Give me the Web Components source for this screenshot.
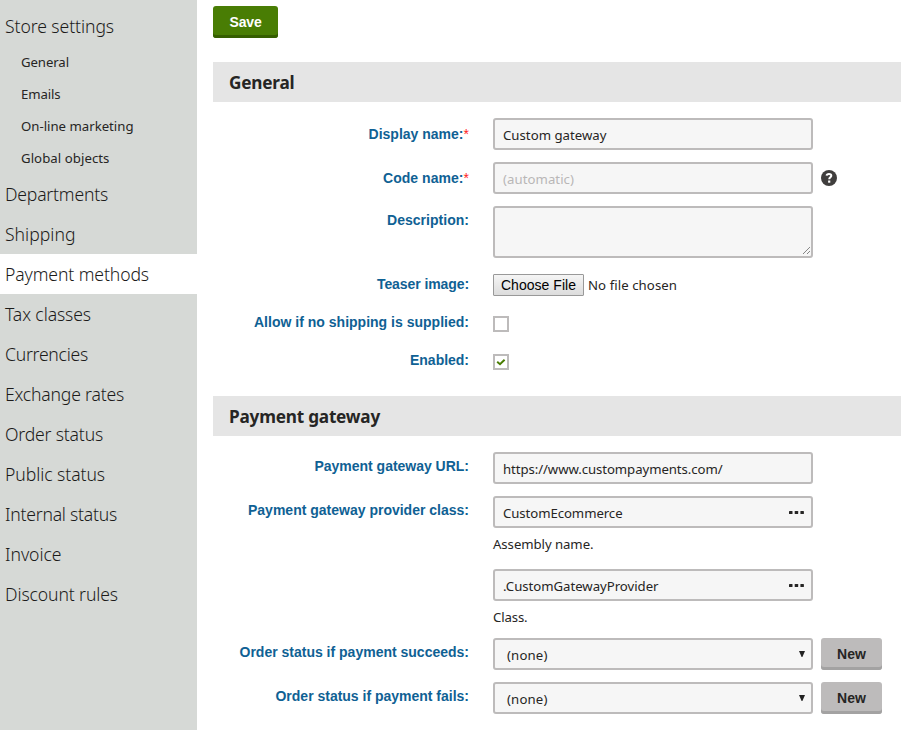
<!DOCTYPE html>
<html lang="en">
<head>
<meta charset="utf-8">
<title>Payment methods</title>
<style>
html, body { margin: 0; height: 100%; }
body { background: #fff; color: #262524; overflow: hidden; font: 14px/20px "Noto Sans", "Open Sans", sans-serif; }
</style>
</head>
<body>
<store-app></store-app>
<script>
const define = (name, html, setup) => {
  const template = document.createElement('template');
  template.innerHTML = html;
  customElements.define(name, class extends HTMLElement {
    constructor() {
      super();
      this.attachShadow({ mode: 'open' }).append(template.content.cloneNode(true));
    }
    connectedCallback() { if (setup) setup(this, this.shadowRoot); }
  });
};

// Text run whose letter-spacing is adjusted to reach the advance width given in "w".
define('fit-text', `<style>
:host { display: inline-block; white-space: nowrap; }
</style><slot></slot>`, el => {
  const w = parseFloat(el.getAttribute('w'));
  const count = el.textContent.length;
  if (w && count) el.style.letterSpacing = ((w - el.getBoundingClientRect().width) / count).toFixed(3) + 'px';
});

define('nav-item', `<style>
:host { display: flex; align-items: center; box-sizing: border-box; height: 40px; padding: 1px 0 0 5px; font-size: 17.6px; font-weight: 300; line-height: 39px; color: #1c1b1a; }
:host([sub]) { height: 32px; padding: 0 0 0 21px; font-size: 13.2px; font-weight: 400; line-height: 32px; color: #262524; }
:host([active]) { background: #fff; }
</style><slot></slot>`);

define('side-nav', `<style>
:host { display: block; box-sizing: border-box; width: 197px; height: 100%; padding-top: 6px; background: #d6d9d6; }
</style><slot></slot>`);

define('form-section', `<style>
:host { display: block; }
h2 { margin: 0; height: 40px; box-sizing: border-box; padding: 1px 0 0 16px; background: #e5e5e5; font-size: 17.2px; line-height: 40px; font-weight: 700; }
.rows { display: flex; flex-direction: column; gap: 12px; padding-top: 16px; }
</style><h2><slot name="title"></slot></h2><div class="rows"><slot></slot></div>`);

define('form-row', `<style>
:host { display: grid; grid-template-columns: 256px 1fr; column-gap: 24px; align-items: start; }
.label { padding-top: var(--lt, 4px); text-align: right; line-height: 20px; color: #0f6194; font: bold 14px/20px "Liberation Sans", Arial, sans-serif; }
.field { display: flex; align-items: center; gap: 8px; }
</style><div class="label"><slot name="label"></slot></div><div class="field"><slot></slot></div>`);

define('req-mark', `<style>:host { color: #f22; font-weight: 400; }</style>*`);

define('text-field', `<style>
:host { display: flex; align-items: center; box-sizing: border-box; width: 320px; height: 32px; border: 2px solid #bdbbbb; border-radius: 3px; background: #f6f6f6; padding: 2px 8px 0; font-size: 13.2px; line-height: 20px; }
:host([hint]) { color: #b9b7b7; }
:host([area]) { position: relative; height: 52px; }
svg { display: none; margin-left: auto; }
:host([area]) .grip { display: block; position: absolute; right: 0; bottom: 1px; }
:host([more]) .dots { display: block; margin-right: -1px; margin-top: -2px; }
:host([select]) { padding-left: 12px; }
:host([select]) .tri { display: block; margin-right: -2px; margin-top: -2px; }
</style><slot></slot>
<svg class="grip" width="9" height="9" viewBox="0 0 9 9" stroke="#555" stroke-width="1" stroke-dasharray="1 .4"><path d="M1 8L8 1M5 8L8 5"/></svg>
<svg class="dots" width="15" height="3" viewBox="0 0 15 3" fill="#262524"><rect width="3.5" height="3" rx=".6"/><rect x="5.7" width="3.5" height="3" rx=".6"/><rect x="11.4" width="3.5" height="3" rx=".6"/></svg>
<svg class="tri" width="6" height="6" viewBox="0 0 6 6" fill="#222"><path d="M0 0H6L3.4 6H2.6Z"/></svg>`);

define('push-button', `<style>
:host { display: flex; justify-content: center; box-sizing: border-box; width: 61px; height: 32px; border-radius: 3px; background: #bdbbbb; box-shadow: inset 0 -3px #a3a2a2; color: #262524; font: bold 14px/32px "Liberation Sans", Arial, sans-serif; }
:host([primary]) { width: 65px; background: #497d04; box-shadow: inset 0 -3px #355e00; color: #fff; }
</style><slot></slot>`);

define('file-button', `<style>
:host { display: flex; justify-content: center; box-sizing: border-box; width: 91px; height: 22px; margin-right: -4px; border: 1px solid #999; border-radius: 1px; background: linear-gradient(#f5f5f5, #dcdcdc); color: #000; font: 14px/20px "Liberation Sans", Arial, sans-serif; }
</style><slot></slot>`);

define('check-box', `<style>
:host { display: grid; place-items: center; box-sizing: border-box; width: 16px; height: 16px; border: 2px solid #bdbbbb; background: #fff; }
svg { display: none; }
:host([checked]) svg { display: block; }
</style><svg width="10" height="8" viewBox="0 0 10 8" fill="none" stroke="#497d04" stroke-width="2"><path d="M1.2 3.8L4 6.2L8.6 1.8"/></svg>`);

define('help-icon', `<style>:host { display: block; height: 16px; }</style>
<svg width="16" height="16" viewBox="0 0 16 16"><circle cx="8" cy="8" r="8" fill="#403e3d"/><path d="M5.6 5.6C5.7 4.4 6.6 3.9 8 3.9C9.4 3.9 10.3 4.6 10.3 5.7C10.3 7.2 8.2 7.3 8.2 9.2" fill="none" stroke="#fff" stroke-width="2"/><rect x="7.1" y="10.5" width="2.2" height="2.2" fill="#fff"/></svg>`);

define('store-app', `<style>
:host { display: grid; grid-template-columns: 197px 1fr; height: 100%; }
main { display: flex; flex-direction: column; padding: 6px 0 0 16px; }
form-section { margin-top: 24px; }
form-section + form-section { margin-top: 26px; }
.help { line-height: 20px; margin: -6px 0 1px; font-size: 13.2px; }
</style>
<side-nav>
<nav-item><fit-text w="109">Store settings</fit-text></nav-item>
<nav-item sub><fit-text w="48">General</fit-text></nav-item>
<nav-item sub><fit-text w="39.5">Emails</fit-text></nav-item>
<nav-item sub><fit-text w="112.5">On-line marketing</fit-text></nav-item>
<nav-item sub><fit-text w="88.5">Global objects</fit-text></nav-item>
<nav-item><fit-text w="103">Departments</fit-text></nav-item>
<nav-item><fit-text w="70.5">Shipping</fit-text></nav-item>
<nav-item active><fit-text w="144">Payment methods</fit-text></nav-item>
<nav-item><fit-text w="86">Tax classes</fit-text></nav-item>
<nav-item><fit-text w="83">Currencies</fit-text></nav-item>
<nav-item><fit-text w="119">Exchange rates</fit-text></nav-item>
<nav-item><fit-text w="98">Order status</fit-text></nav-item>
<nav-item><fit-text w="100">Public status</fit-text></nav-item>
<nav-item><fit-text w="112">Internal status</fit-text></nav-item>
<nav-item><fit-text w="56.5">Invoice</fit-text></nav-item>
<nav-item><fit-text w="113">Discount rules</fit-text></nav-item>
</side-nav>
<main>
<push-button primary><fit-text w="32">Save</fit-text></push-button>
<form-section><fit-text slot="title" w="65.5">General</fit-text>
<form-row style="--lt:6px"><span slot="label"><fit-text w="95">Display name:</fit-text><req-mark></req-mark></span><text-field><fit-text w="103.5">Custom gateway</fit-text></text-field></form-row>
<form-row style="--lt:6px"><span slot="label"><fit-text w="80.5">Code name:</fit-text><req-mark></req-mark></span><text-field hint><fit-text w="71">(automatic)</fit-text></text-field><help-icon></help-icon></form-row>
<form-row><fit-text slot="label" w="82">Description:</fit-text><text-field area></text-field></form-row>
<form-row style="--lt:0px;margin-top:4px"><fit-text slot="label" w="92">Teaser image:</fit-text><file-button><fit-text w="75">Choose File</fit-text></file-button><fit-text w="89" style="font-size:13.2px">No file chosen</fit-text></form-row>
<form-row style="--lt:0px;margin-top:4px"><fit-text slot="label" w="215">Allow if no shipping is supplied:</fit-text><check-box style="margin-top:4px"></check-box></form-row>
<form-row style="--lt:0px;margin-top:6px"><fit-text slot="label" w="59">Enabled:</fit-text><check-box checked style="margin-top:4px"></check-box></form-row>
</form-section>
<form-section><fit-text slot="title" w="151">Payment gateway</fit-text>
<form-row><fit-text slot="label" w="154.5">Payment gateway URL:</fit-text><text-field><fit-text w="219.5">https://www.custompayments.com/</fit-text></text-field></form-row>
<form-row><fit-text slot="label" w="221">Payment gateway provider class:</fit-text><text-field more><fit-text w="119.5">CustomEcommerce</fit-text></text-field></form-row>
<form-row><div class="help"><fit-text w="100.5">Assembly name.</fit-text></div></form-row>
<form-row style="margin-top:2px"><text-field more><fit-text w="155.5">.CustomGatewayProvider</fit-text></text-field></form-row>
<form-row><div class="help"><fit-text w="34.5">Class.</fit-text></div></form-row>
<form-row style="margin-top:-2px"><fit-text slot="label" w="229.5">Order status if payment succeeds:</fit-text><text-field select><fit-text w="40.5">(none)</fit-text></text-field><push-button><fit-text w="29">New</fit-text></push-button></form-row>
<form-row><fit-text slot="label" w="193.5">Order status if payment fails:</fit-text><text-field select><fit-text w="40.5">(none)</fit-text></text-field><push-button><fit-text w="29">New</fit-text></push-button></form-row>
</form-section>
</main>`);
</script>
</body>
</html>
